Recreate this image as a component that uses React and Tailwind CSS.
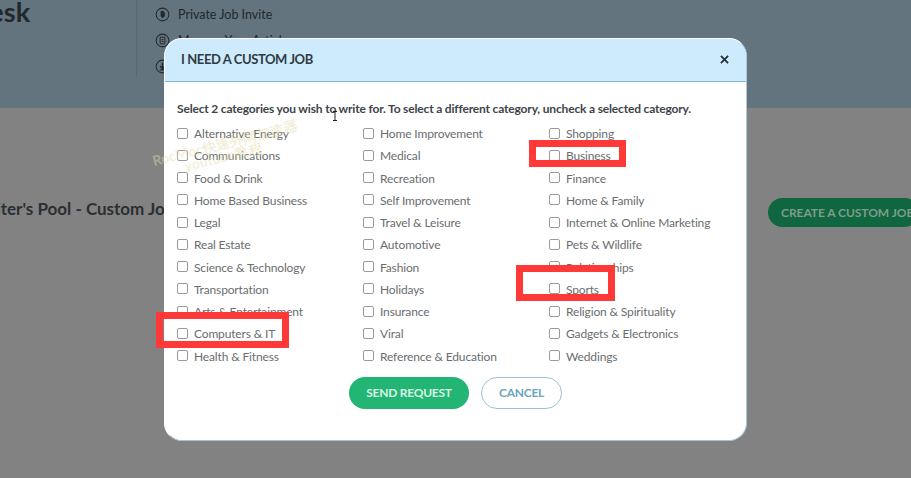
import React from 'react';

const columns = [
    ['Alternative Energy', 'Communications', 'Food & Drink', 'Home Based Business', 'Legal', 'Real Estate', 'Science & Technology', 'Transportation', 'Arts & Entertainment', 'Computers & IT', 'Health & Fitness'],
    ['Home Improvement', 'Medical', 'Recreation', 'Self Improvement', 'Travel & Leisure', 'Automotive', 'Fashion', 'Holidays', 'Insurance', 'Viral', 'Reference & Education'],
    ['Shopping', 'Business', 'Finance', 'Home & Family', 'Internet & Online Marketing', 'Pets & Wildlife', 'Relationships', 'Sports', 'Religion & Spirituality', 'Gadgets & Electronics', 'Weddings']
];

const CircleIcon = ({ children }) => (
    <svg viewBox="0 0 16 16" className="h-[15px] w-[15px] shrink-0 text-[#20282d]" fill="none" stroke="currentColor">
        <circle cx="8" cy="8" r="6.8" strokeWidth="1.1" />
        {children}
    </svg>
);

const App = () => {
    return (
        <div className="relative h-[478px] w-[911px] overflow-hidden bg-[#828282] font-['Lato','Liberation_Sans',sans-serif]">
            {/* Dimmed page behind the dialog */}
            <div className="flex h-[108px] bg-[#64747e]">
                <div className="h-[77px] w-[137px] border-r border-[#5a6973]">
                    <div className="-ml-[31px] -mt-[4px] text-[27px] font-bold leading-[32px] text-[#20282d]">Desk</div>
                </div>
                <div className="flex flex-col gap-[11px] pl-[18px] pt-[7px] text-[12.5px] leading-[15px] text-[#20282d]">
                    <div className="flex items-center gap-[8px]">
                        <CircleIcon><path d="M6 4.5v5l2 2.5 2.5-2.5V6L8.5 4z" fill="currentColor" stroke="none" /></CircleIcon>
                        <span>Private Job Invite</span>
                    </div>
                    <div className="flex items-center gap-[8px]">
                        <CircleIcon><path d="M5.5 4.5h5v7h-5zM7 7h2M7 9h2" strokeWidth="1" /></CircleIcon>
                        <span>Manage Your Articles</span>
                    </div>
                    <div className="flex items-center gap-[8px]">
                        <CircleIcon><path d="M8 4v5M5.5 7.5 8 10.5l2.5-3M5 11.5h6" strokeWidth="1.4" /></CircleIcon>
                        <span>Download</span>
                    </div>
                </div>
            </div>
            <div className="flex items-center justify-between pt-[81px]">
                <h2 className="-ml-[27px] whitespace-nowrap text-[17px] font-bold leading-[40px] text-[#2a2f33]">Writer's Pool - Custom Job</h2>
                <button className="-mr-[8px] mt-[7px] h-[29px] w-[151px] whitespace-nowrap rounded-full bg-[#10663f] pl-[13px] text-left text-[12px] font-bold tracking-[-0.05px] text-[#7f9c8d]">CREATE A CUSTOM JOB</button>
            </div>

            {/* Dialog */}
            <div className="absolute left-[164px] top-[38px] h-[403px] w-[583px] overflow-hidden rounded-[18px] border border-white border-r-[#a9cbd9] border-b-[#a9c3cd] bg-white">
                <div className="flex h-[43px] items-center justify-between border-b border-[#84bacb] bg-[#cdebfd] pl-[16px] pr-[17px]">
                    <span className="-mt-[1px] text-[13px] font-bold tracking-[-0.4px] text-[#2f3b44]">I NEED A CUSTOM JOB</span>
                    <svg viewBox="0 0 10 10" className="-mt-[2px] h-[9px] w-[9px] text-[#1d2b36]" fill="none" stroke="currentColor" strokeWidth="1.9">
                        <path d="M1 1l8 8M9 1l-8 8" />
                    </svg>
                </div>
                <div className="pl-[12px] pt-[19px]">
                    <p className="text-[12px] font-bold leading-[16px] tracking-[-0.17px] text-[#3e4449]">
                        Select 2 categories you wish to write for. To select a different category, uncheck a selected category.
                    </p>
                    <div className="mt-[6px] grid w-[558px] grid-cols-3">
                        {columns.map((items) => (
                            <div key={items[0]} className="flex flex-col">
                                {items.map((item) => (
                                    <label key={item} className="flex h-[22.25px] items-center gap-[6px] whitespace-nowrap text-[12px] tracking-[-0.15px] text-[#6a6d70]">
                                        <input type="checkbox" className="-mt-[2px] h-[11px] w-[11px] appearance-none rounded-[2px] border border-[#9a9a9a] bg-white" />
                                        <span>{item}</span>
                                    </label>
                                ))}
                            </div>
                        ))}
                    </div>
                    <div className="mt-[9px] flex justify-center gap-[12px] pr-[12px]">
                        <button className="h-[32px] w-[120px] rounded-full bg-[#22b573] text-[12px] font-bold tracking-[-0.25px] text-[#d9f5e7]">SEND REQUEST</button>
                        <button className="h-[32px] w-[81px] rounded-full border border-[#9cc3d3] bg-white text-[12px] font-bold tracking-[-0.25px] text-[#6ba4bd]">CANCEL</button>
                    </div>
                </div>
            </div>

            {/* Red annotation boxes drawn over the video frame */}
            <div className="absolute left-[529px] top-[140px] h-[27px] w-[97px] border-[7px] border-[#ff3838]" />
            <div className="absolute left-[516px] top-[265px] h-[36px] w-[99px] border-[7px] border-[#ff3838]" />
            <div className="absolute left-[156px] top-[312px] h-[36px] w-[133px] border-[7px] border-[#ff3838]" />

            {/* Watermark and text cursor */}
            <div className="absolute left-[152px] top-[136px] -rotate-[14deg] whitespace-nowrap text-center text-[14px] font-bold leading-[13px] text-[#e6dcae]/45">
                <div>RocMoc快速外网加速器</div>
                <div className="pr-[10px]">youtube教程</div>
            </div>
            <svg viewBox="0 0 6 10" className="absolute left-[332px] top-[111px] h-[10px] w-[6px] text-[#222]" fill="none" stroke="currentColor" strokeWidth="1">
                <path d="M1 .5h4M3 .5v9M1 9.5h4" />
            </svg>
        </div>
    );
};

export default App;
